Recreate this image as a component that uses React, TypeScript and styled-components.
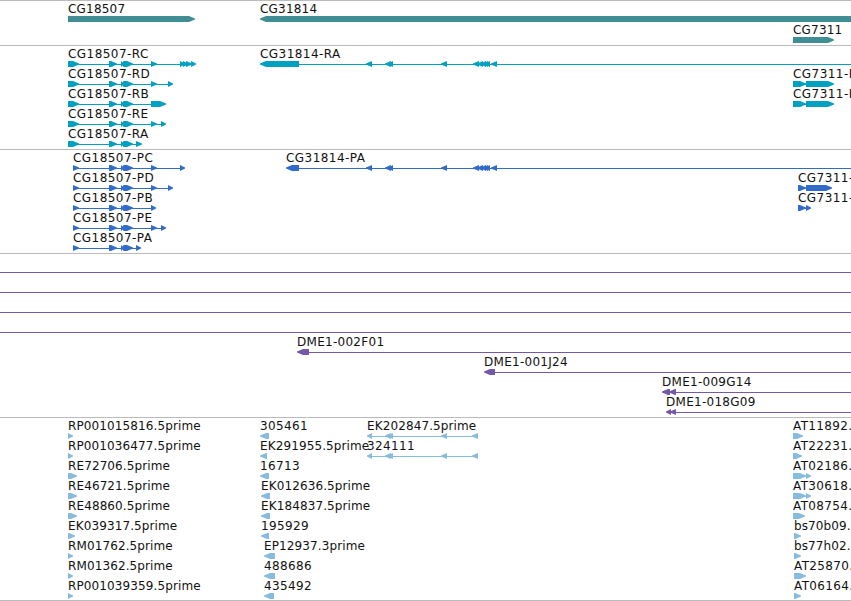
import styled, { createGlobalStyle } from "styled-components"

type Span = [number, number]

type Feature = {
  label?: string;
  exons: Span[];
  reverse?: boolean;
  // where the connecting line stops, when it runs past the last exon
  to?: number;
  from?: number;
}

type TrackData = {
  name: string;
  color: string;
  gap?: number;
  rows: Feature[][];
}

const WIDTH = 851
const BAR = 6
const HEAD = 6

const start: Span[] = [[68, 79], [109, 117], [121, 124], [123, 128], [124, 133]]
const coding: Span[] = [[73, 79], [109, 117], [121, 124], [123, 128], [124, 133]]
const introns: Span[] = [[366, 372], [385, 391], [388, 393], [441, 447], [473, 479], [477, 483], [481, 486], [483, 488], [485, 490], [491, 497]]
const estSpans: Span[] = [[367, 372], [385, 391], [388, 393], [441, 447], [472, 478]]

const one = (label: string, from: number, to: number, reverse = false): Feature => (
  { label, exons: [[from, to]], reverse }
)

const tracks: TrackData[] = [
  {
    name: 'genes',
    color: '#408e94',
    gap: 1,
    rows: [
      [one('CG18507', 68, 195), one('CG31814', 260, 860, true)],
      [one('CG7311', 793, 834)],
    ],
  },
  {
    name: 'transcripts',
    color: '#00a0c0',
    rows: [
      [
        { label: 'CG18507-RC', exons: [...start, [151, 157], [180, 185], [183, 188], [186, 192], [191, 196]] },
        { label: 'CG31814-RA', exons: [[260, 299], ...introns], reverse: true, to: WIDTH },
      ],
      [
        { label: 'CG18507-RD', exons: [...start, [151, 157], [168, 173]] },
        { label: 'CG7311-RB', exons: [[793, 806], [806, 834]] },
      ],
      [
        { label: 'CG18507-RB', exons: [...start, [151, 166]] },
        { label: 'CG7311-RA', exons: [[793, 806], [806, 834]] },
      ],
      [{ label: 'CG18507-RE', exons: [...start, [151, 157], [161, 166]] }],
      [{ label: 'CG18507-RA', exons: [...start, [136, 142]] }],
    ],
  },
  {
    name: 'proteins',
    color: '#316ccc',
    rows: [
      [
        { label: 'CG18507-PC', exons: [...coding, [151, 157], [180, 185]] },
        { label: 'CG31814-PA', exons: [[286, 299], ...introns], reverse: true, to: WIDTH },
      ],
      [
        { label: 'CG18507-PD', exons: [...coding, [151, 157], [168, 173]] },
        { label: 'CG7311-PB', exons: [[798, 806], [806, 832]] },
      ],
      [
        { label: 'CG18507-PB', exons: [...coding, [151, 156]] },
        { label: 'CG7311-PA', exons: [[798, 806], [806, 811]] },
      ],
      [{ label: 'CG18507-PE', exons: [...coding, [151, 157], [161, 166]] }],
      [{ label: 'CG18507-PA', exons: [...coding, [136, 141]] }],
    ],
  },
  {
    name: 'clones',
    color: '#7658a8',
    rows: [
      [{ exons: [], from: 0, to: WIDTH }],
      [{ exons: [], from: 0, to: WIDTH }],
      [{ exons: [], from: 0, to: WIDTH }],
      [{ exons: [], from: 0, to: WIDTH }],
      [{ label: 'DME1-002F01', exons: [[297, 309]], reverse: true, to: WIDTH }],
      [{ label: 'DME1-001J24', exons: [[484, 495]], reverse: true, to: WIDTH }],
      [{ label: 'DME1-009G14', exons: [[662, 670], [669, 676]], reverse: true, to: WIDTH }],
      [{ label: 'DME1-018G09', exons: [[666, 671], [670, 676]], reverse: true, to: WIDTH }],
    ],
  },
  {
    name: 'ests',
    color: '#88bcde',
    rows: [
      [
        one('RP001015816.5prime', 68, 73),
        one('305461', 260, 269, true),
        { label: 'EK202847.5prime', exons: estSpans, reverse: true },
        one('AT11892.5prime', 793, 803),
      ],
      [
        one('RP001036477.5prime', 68, 73),
        one('EK291955.5prime', 260, 267, true),
        { label: '324111', exons: estSpans, reverse: true },
        one('AT22231.5prime', 793, 802),
      ],
      [
        one('RE72706.5prime', 68, 77),
        one('16713', 260, 269, true),
        { label: 'AT02186.5prime', exons: [[793, 806], [806, 811]] },
      ],
      [
        one('RE46721.5prime', 68, 77),
        one('EK012636.5prime', 261, 270, true),
        { label: 'AT30618.5prime', exons: [[793, 806], [806, 811]] },
      ],
      [one('RE48860.5prime', 68, 77), one('EK184837.5prime', 261, 270, true), one('AT08754.5prime', 793, 805)],
      [one('EK039317.5prime', 68, 75), one('195929', 261, 269, true), one('bs70b09.5prime', 794, 801)],
      [one('RM01762.5prime', 68, 73), one('EP12937.3prime', 264, 275, true), one('bs77h02.5prime', 794, 801)],
      [one('RM01362.5prime', 68, 73), one('488686', 264, 275, true), one('AT25870.5prime', 794, 806)],
      [one('RP001039359.5prime', 68, 73), one('435492', 264, 274, true), one('AT06164.5prime', 794, 801)],
    ],
  },
]

const spacing = (label: string) => {
  if (label.startsWith('CG') && label.includes('-')) return 0.45
  if (label.startsWith('DME')) return 0.28
  if (label.startsWith('AT') || /^\d+$/.test(label)) return 0.36
  if (label.endsWith('prime')) return 0.11
  return 0.2
}

const arrow = ([a, b]: Span, reverse?: boolean) => {
  const head = Math.min(HEAD, b - a)
  const mid = BAR / 2
  return reverse
    ? `${b},0 ${a + head},0 ${a},${mid - 0.5} ${a},${mid + 0.5} ${a + head},${BAR} ${b},${BAR}`
    : `${a},0 ${b - head},0 ${b},${mid - 0.5} ${b},${mid + 0.5} ${b - head},${BAR} ${a},${BAR}`
}

const Glyphs = ({ features }: { features: Feature[] }) => (
  <Bar width={WIDTH} height={BAR}>
    {features.map(({ exons, reverse, from, to }, i) => {
      const x1 = from ?? exons[0][0] + 1
      const x2 = to ?? exons[exons.length - 1][1] - 1
      return (
        <g key={i}>
          <rect x={x1} y={3} width={x2 - x1} height={1} />
          {exons.map((exon, j) => <polygon key={j} points={arrow(exon, reverse)} />)}
        </g>
      )
    })}
  </Bar>
)

const App = () => (
  <>
    <GlobalStyle />
    <Browser>
      {tracks.map((track) => (
        <Track key={track.name} $color={track.color} $gap={track.gap}>
          {track.rows.map((features, i) => (
            <Row key={i}>
              <Labels>
                {features.map((f) => f.label && (
                  <Label key={f.label} $x={f.exons[0][0]} $spacing={spacing(f.label)}>{f.label}</Label>
                ))}
              </Labels>
              <Glyphs features={features} />
            </Row>
          ))}
        </Track>
      ))}
    </Browser>
  </>
)

const GlobalStyle = createGlobalStyle`
  body {
    margin: 0;
    background: #fff;
    overflow: hidden;
  }
`

const Browser = styled.div`
  width: ${WIDTH}px;
  height: 600px;
  overflow: hidden;
  border-bottom: 1px solid #bbb;
`

const Track = styled.section<{ $color: string; $gap?: number }>`
  display: flex;
  flex-direction: column;
  gap: ${(props) => props.$gap ?? 0}px;
  padding: 1px 0 2px;
  border-top: 1px solid #bbb;
  fill: ${(props) => props.$color};
`

const Row = styled.div`
  display: flex;
  flex-direction: column;
  height: 20px;
`

// every label starts at its own genome coordinate, so they share one grid cell
const Labels = styled.div`
  display: grid;
  height: 14px;
`

const Label = styled.span<{ $x: number; $spacing: number }>`
  grid-area: 1 / 1;
  margin-left: ${(props) => props.$x}px;
  color: #111;
  font: 12px/14px "DejaVu Sans", sans-serif;
  letter-spacing: ${(props) => props.$spacing}px;
  white-space: nowrap;
`

const Bar = styled.svg`
  display: block;
  flex: none;
`

export default App
